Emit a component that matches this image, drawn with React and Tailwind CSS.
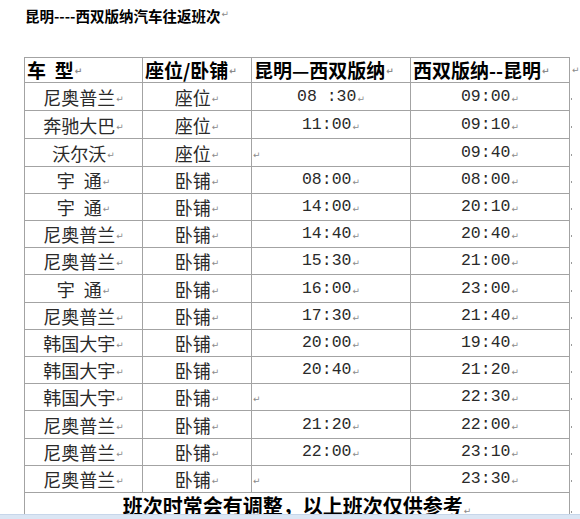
import React from "react";

const rows = [
  ["尼奥普兰", "座位", "08 :30", "09:00"],
  ["奔驰大巴", "座位", "11:00", "09:10"],
  ["沃尔沃", "座位", "", "09:40"],
  ["宇\u2002通", "卧铺", "08:00", "08:00"],
  ["宇\u2002通", "卧铺", "14:00", "20:10"],
  ["尼奥普兰", "卧铺", "14:40", "20:40"],
  ["尼奥普兰", "卧铺", "15:30", "21:00"],
  ["宇\u2002通", "卧铺", "16:00", "23:00"],
  ["尼奥普兰", "卧铺", "17:30", "21:40"],
  ["韩国大宇", "卧铺", "20:00", "19:40"],
  ["韩国大宇", "卧铺", "20:40", "21:20"],
  ["韩国大宇", "卧铺", "", "22:30"],
  ["尼奥普兰", "卧铺", "21:20", "22:00"],
  ["尼奥普兰", "卧铺", "22:00", "23:10"],
  ["尼奥普兰", "卧铺", "", "23:30"],
];

const gridRows =
  "grid-rows-[24px_27px_27px_27px_26px_26px_26px_26px_27px_26px_26px_26px_26px_27px_26px_26px_40px]";

function Mark({ className = "" }) {
  return (
    <span
      className={
        "font-['DejaVu_Sans',sans-serif] text-[9px] leading-none text-[#8a8a8a] self-end mb-[6px] " +
        className
      }
    >
      ↵
    </span>
  );
}

function Header({ children }) {
  return (
    <div className="bg-white flex items-center pl-[2px] text-[19px] font-bold leading-[24px] text-black whitespace-nowrap">
      <span>{children}</span>
      <Mark className="ml-[1px] mb-[4px]" />
    </div>
  );
}

function Cell({ children, mono }) {
  if (!children) {
    return (
      <div className="bg-white flex items-end pl-[1px] pb-[6px]">
        <span className="font-['DejaVu_Sans',sans-serif] text-[9px] leading-none text-[#8a8a8a]">↵</span>
      </div>
    );
  }
  return (
    <div className="bg-white flex items-center justify-center whitespace-nowrap text-[#2a2a2a]">
      <span
        className={
          mono
            ? "font-['Liberation_Mono',monospace] text-[16.5px] leading-[20px] whitespace-pre"
            : "text-[18px] leading-[22px]"
        }
      >
        {children}
      </span>
      <Mark className="ml-[1px]" />
    </div>
  );
}

export default function App() {
  return (
    <div className="w-[580px] h-[519px] flex flex-col bg-white overflow-hidden font-['Noto_Sans_CJK_SC',sans-serif]">
      <div className="flex-1 min-h-0 overflow-hidden">
        <div className="pt-[7px] pl-[25px] flex items-end leading-[18px]">
          <span className="text-[14.5px] font-bold text-black">昆明----西双版纳汽车往返班次</span>
          <Mark className="mb-[3px] ml-px" />
        </div>
        <div className="mt-[32px] ml-[24px] flex items-start">
          <div
            className={
              "grid w-[546px] grid-cols-[117px_108px_158px_158px] gap-px p-px bg-[#a3a3a3] " +
              gridRows
            }
          >
            <Header>车&nbsp;&nbsp;型</Header>
            <Header>座位/卧铺</Header>
            <Header>昆明—西双版纳</Header>
            <Header>西双版纳--昆明</Header>
            {rows.map((r, i) => (
              <React.Fragment key={i}>
                <Cell>{r[0]}</Cell>
                <Cell>{r[1]}</Cell>
                <Cell mono>{r[2]}</Cell>
                <Cell mono>{r[3]}</Cell>
              </React.Fragment>
            ))}
            <div className="col-span-4 bg-white flex justify-center items-start">
              <span className="text-[20px] font-bold leading-[26px] text-black">
                班次时常会有调整，以上班次仅供参考
              </span>
              <Mark className="self-start mt-[14px] ml-px" />
            </div>
          </div>
          <div className={"grid w-[10px] gap-px py-px " + gridRows}>
            <div className="flex items-center pl-[2px]">
              <span className="font-['DejaVu_Sans',sans-serif] text-[9px] leading-none text-[#8a8a8a]">↵</span>
            </div>
            {rows.map((_, i) => (
              <div key={i} className="flex items-center pl-[1px] pt-[4px]">
                <span className="w-px h-[2px] bg-[#9a9a9a]" />
              </div>
            ))}
            <div className="flex items-start pl-[1px] pt-[18px]">
              <span className="w-px h-[2px] bg-[#9a9a9a]" />
            </div>
          </div>
        </div>
      </div>
      <div className="h-[5px] shrink-0 bg-[#dbe6f4] border-t border-[#c7d6ea]" />
    </div>
  );
}
